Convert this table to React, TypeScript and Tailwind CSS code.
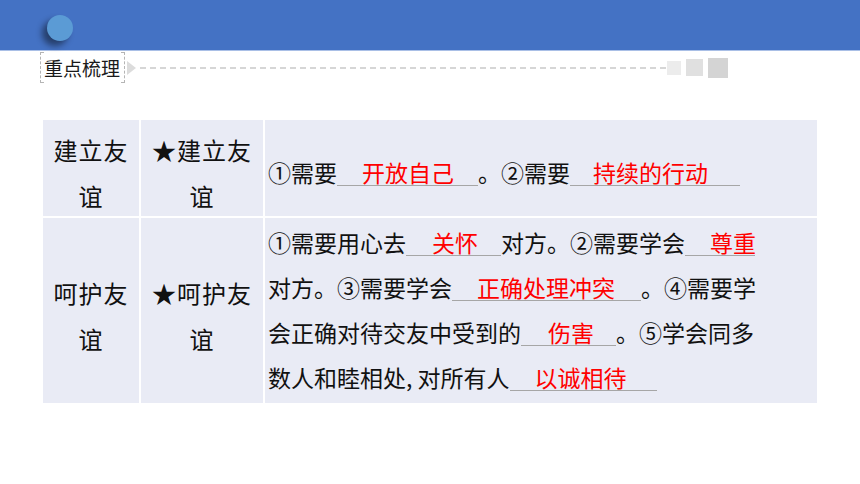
import type { ReactNode } from "react";

// Fill-in blank: underlined slot with the red answer inside
function Blank({ w, pl, children }: { w: number; pl: number; children: ReactNode }) {
  return (
    <span
      className="inline-block border-b border-[#a6a6a6] text-[#ff0000] leading-[26px] align-baseline"
      style={{ width: w, paddingLeft: pl }}
    >
      {children}
    </span>
  );
}

// circled numbers are narrow in Noto, give them a full-width slot
function Num({ children }: { children: ReactNode }) {
  return <span className="inline-block w-[23px]">{children}</span>;
}

function Line({ children }: { children: ReactNode }) {
  return <div className="whitespace-nowrap leading-[45px]">{children}</div>;
}

function HeadCell({ lines }: { lines: string[] }) {
  return (
    <div className="flex items-center justify-center bg-[#e9ebf5] pt-[10px]">
      <div className="text-center text-[24px] tracking-[1px] leading-[46px] text-[#111]">
        {lines.map((l) => (
          <div key={l}>{l}</div>
        ))}
      </div>
    </div>
  );
}

export default function App() {
  return (
    <div className="w-[860px] h-[484px] bg-white overflow-hidden font-['Noto_Sans_CJK_SC',sans-serif]">
      {/* Top bar */}
      <div className="h-[50px] bg-[#4472c4] flex items-start pl-[47px] pt-[15px]">
        <div className="w-[26px] h-[26px] rounded-full bg-[#5b9bd5] shadow-[-5px_5px_6px_rgba(0,0,0,0.45)]" />
      </div>
      <div className="h-[1px] bg-[#a9bfe6]" />

      {/* Section title */}
      <div className="flex items-center pl-[40px] mt-[1px] w-[728px]">
        <div className="relative h-[31px] w-[85px] border-x border-dashed border-[#b5b5b5] flex items-center pl-[3px]">
          <span className="absolute left-0 top-0 w-[3px] h-px bg-[#b5b5b5]" />
          <span className="absolute left-0 bottom-0 w-[3px] h-px bg-[#b5b5b5]" />
          <span className="absolute right-0 top-0 w-[3px] h-px bg-[#b5b5b5]" />
          <span className="absolute right-0 bottom-0 w-[3px] h-px bg-[#b5b5b5]" />
          <span className="text-[19px] leading-none text-[#1a1a1a]">重点梳理</span>
        </div>
        <svg width="12" height="16" viewBox="0 0 12 16" className="ml-[1px]">
          <path d="M1 1 L10 8 L1 15 Z" fill="#dcdcdc" />
        </svg>
        <div className="flex-1 ml-[2px] border-t-2 border-dashed border-[#d6d6d6]" />
        <div className="w-[14px] h-[14px] bg-[#ececec] ml-[1px]" />
        <div className="w-[17px] h-[17px] bg-[#e0e0e0] ml-[5px]" />
        <div className="w-[20px] h-[20px] bg-[#d4d4d4] ml-[5px]" />
      </div>

      {/* Table */}
      <div className="ml-[43px] mt-[37px] w-[774px] grid grid-cols-[96px_122px_552px] grid-rows-[96px_185px] gap-[2px] bg-white text-[#111]">
        <HeadCell lines={["建立友", "谊"]} />
        <HeadCell lines={["★建立友", "谊"]} />
        <div className="flex items-center bg-[#e9ebf5] pl-[3px] pt-[8px] text-[23px]">
          <Line>
            <Num>①</Num>需要<Blank w={141} pl={25}>开放自己</Blank>。<Num>②</Num>需要
            <Blank w={170} pl={23}>持续的行动</Blank>
          </Line>
        </div>

        <HeadCell lines={["呵护友", "谊"]} />
        <HeadCell lines={["★呵护友", "谊"]} />
        <div className="bg-[#e9ebf5] pl-[3px] pt-[2px] text-[23px]">
          <Line>
            <Num>①</Num>需要用心去<Blank w={95} pl={26}>关怀</Blank>对方。<Num>②</Num>需要学会
            <Blank w={70} pl={25}>尊重</Blank>
          </Line>
          <Line>
            对方。<Num>③</Num>需要学会<Blank w={189} pl={25}>正确处理冲突</Blank>。<Num>④</Num>需要学
          </Line>
          <Line>
            会正确对待交友中受到的<Blank w={95} pl={27}>伤害</Blank>。<Num>⑤</Num>学会同多
          </Line>
          <Line>
            数人和睦相处, 对所有人<Blank w={147} pl={25}>以诚相待</Blank>
          </Line>
        </div>
      </div>
    </div>
  );
}
